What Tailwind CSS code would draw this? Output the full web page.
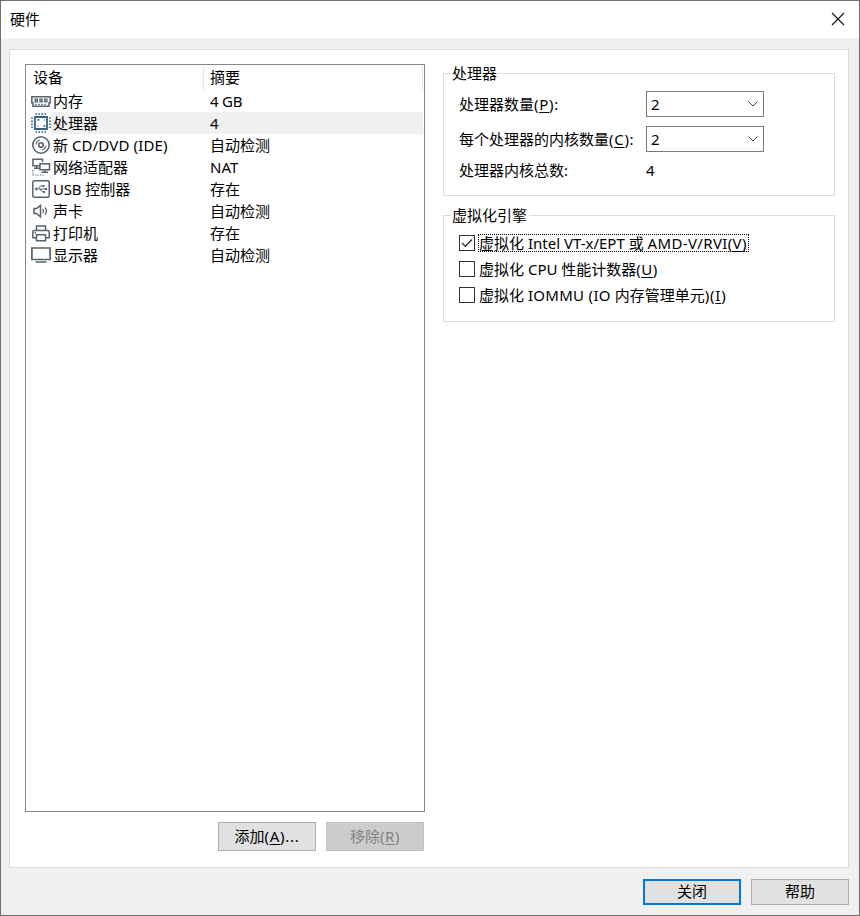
<!DOCTYPE html>
<html lang="zh-CN">
<head>
<meta charset="utf-8">
<title>硬件</title>
<script src="https://cdn.jsdelivr.net/npm/@tailwindcss/browser@4"></script>
</head>
<body class="w-[860px] h-[916px] overflow-hidden text-black text-[15px] leading-[22px] font-['Noto_Sans','Noto_Sans_CJK_SC',sans-serif] whitespace-nowrap">
<div class="flex flex-col w-[860px] h-[916px] border border-[#6e6e6e] bg-[#f0f0f0]">
  <header class="flex items-center justify-between h-[37px] shrink-0 bg-white pl-[9px] pr-[14px]">
    <h1 class="text-[15px] pb-[2px]">硬件</h1>
    <svg class="w-[14px] h-[14px] mb-px" viewBox="0 0 14 14" fill="none" stroke="#111" stroke-width="1.1"><path d="M1 1l12 12M13 1L1 13"/></svg>
  </header>
  <main class="flex mt-[11px] mx-2 pl-[15px] pt-[14px] w-[840px] h-[819px] shrink-0 border border-[#dcdcdc] bg-white">
    <section class="w-[400px]">
      <div class="w-[400px] h-[748px] border border-[#828790] pt-px pr-px">
        <div class="flex h-6 leading-[23px]">
          <div class="w-[178px] pl-[7px] border-r border-[#e5e5e5]">设备</div>
          <div class="grow pl-[6px] border-r border-[#e5e5e5]">摘要</div>
        </div>
        <div class="flex h-[22px] pl-[5px]">
          <svg class="w-5 h-[22px] shrink-0" viewBox="0 0 20 22" fill="none" stroke="#54646f"><path d="M.8 6.800h18.400v6h-1.200v3.400H2v-3.400H.8z" stroke-width="1.500"/><path d="M3.500 8.500h3.500v4h-3.500zM8.300 8.500h3.500v4h-3.500zM13.100 8.500h3.500v4h-3.500z" fill="#54646f" stroke="none"/><path d="M4.700 9.800h1.200v1.200h-1.200zM9.500 9.800h1.200v1.200h-1.200zM14.300 9.800h1.200v1.200h-1.200z" fill="#b8c0c6" stroke="none"/><path d="M4 14.300h12" stroke-dasharray="2 1"/></svg>
          <div class="w-[154px] pl-[2px]">内存</div><div class="grow pl-[5px] tracking-[-.2px]">4 GB</div>
        </div>
        <div class="flex h-[22px] pl-[5px]">
          <svg class="w-5 h-[22px] shrink-0" viewBox="0 0 20 22" fill="none" stroke="#35617f"><path d="M4 5h12v12H4z" stroke-width="1.800"/><path d="M4.500 2h11.500M4.500 20h11.500M1 5.500v11.500M19 5.500v11.500" stroke-width="2.200" stroke-dasharray="1.500 1.500" stroke="#55809e"/><path d="M6.500 7h1.800v1.800H6.500zM12.500 13h1.800v1.800h-1.800zM6.500 13.500h1v1h-1zM13 7.500h1v1h-1z" fill="#35617f" stroke="none"/></svg>
          <div class="w-[154px] pl-[2px] bg-[#f0f0f0]">处理器</div><div class="grow pl-[5px] bg-[#f0f0f0]">4</div>
        </div>
        <div class="flex h-[22px] pl-[5px]">
          <svg class="w-5 h-[22px] shrink-0" viewBox="0 0 20 22" fill="none" stroke="#54646f"><circle cx="10" cy="11" r="8.200" stroke-width="1.600"/><circle cx="10" cy="11" r="2.300" stroke-width="1.600"/><path d="M5 10.500q.5-3.500 4-4.500M15 11.500q-.5 3.500-4 4.500" stroke-width="1.200"/></svg>
          <div class="w-[154px] pl-[2px]">新 <span class="tracking-[.15px]">CD/DVD (IDE)</span></div><div class="grow pl-[5px]">自动检测</div>
        </div>
        <div class="flex h-[22px] pl-[5px]">
          <svg class="w-5 h-[22px] shrink-0" viewBox="0 0 20 22" fill="none" stroke="#54646f" stroke-width="1.500"><path d="M8.500 9.700H1.900V3.300h9.600V6M5.500 9.700v2.300M3 12.200h5.500M9 7.700h9.500v6H9zM13.700 14v2M10.500 16.200h6.500"/><path d="M1.900 14v5h11.500" stroke-width="1.200" stroke-dasharray="1.200 1.200"/></svg>
          <div class="w-[154px] pl-[2px]">网络适配器</div><div class="grow pl-[5px]">NAT</div>
        </div>
        <div class="flex h-[22px] pl-[5px]">
          <svg class="w-5 h-[22px] shrink-0" viewBox="0 0 20 22" fill="none" stroke="#54646f"><rect x="1.800" y="2.800" width="16.400" height="16.400" rx="1.500" stroke-width="1.500"/><path d="M5 11h10M7 11l2.500-3H12M9 11l2.500 3H13"/><path d="M6 9v4l-2.500-2z" fill="#54646f" stroke="none"/><circle cx="15" cy="11" r="1.200" fill="#54646f" stroke="none"/><path d="M11.500 7h2v2h-2zM12 13h2v2h-2z" fill="#54646f" stroke="none"/></svg>
          <div class="w-[154px] pl-[2px]"><span class="tracking-[-.2px]">USB</span> 控制器</div><div class="grow pl-[5px]">存在</div>
        </div>
        <div class="flex h-[22px] pl-[5px]">
          <svg class="w-5 h-[22px] shrink-0" viewBox="0 0 20 22" fill="none" stroke="#54646f" stroke-width="1.500"><path d="M3 8.600h2.500l4-3.300v11.500l-4-3.300H3z"/><path d="M11.800 9q1.300 2 0 4.200M14 7.500q2.800 3.500 0 7" stroke-width="1.300"/></svg>
          <div class="w-[154px] pl-[2px]">声卡</div><div class="grow pl-[5px]">自动检测</div>
        </div>
        <div class="flex h-[22px] pl-[5px]">
          <svg class="w-5 h-[22px] shrink-0" viewBox="0 0 20 22" fill="none" stroke="#54646f" stroke-width="1.500"><path d="M5.500 8.500V4h9v4.500M5 15.800H1.800V10q0-1.500 1.500-1.500h13.400q1.500 0 1.500 1.500v5.800H15M5.500 12.700h9v6h-9zM3.500 10.800h1.500"/></svg>
          <div class="w-[154px] pl-[2px]">打印机</div><div class="grow pl-[5px]">存在</div>
        </div>
        <div class="flex h-[22px] pl-[5px]">
          <svg class="w-5 h-[22px] shrink-0" viewBox="0 0 20 22" fill="none" stroke="#54646f" stroke-width="1.700"><path d="M.9 4h18.200v11.500H.9zM4.500 18h11"/></svg>
          <div class="w-[154px] pl-[2px]">显示器</div><div class="grow pl-[5px]">自动检测</div>
        </div>
      </div>
      <div class="flex justify-end gap-[10px] mt-[10px] pr-px leading-[26px]">
        <button class="w-[98px] h-[29px] pb-[2px] border border-[#adadad] bg-[#e1e1e1]">添加<span class="tracking-[.7px]">(<u class="underline-offset-2">A</u>)...</span></button>
        <button disabled class="w-[98px] h-[29px] pb-[2px] border border-[#bfbfbf] bg-[#cccccc] text-[#838383]">移除<span class="tracking-[.6px]">(<u class="underline-offset-2">R</u>)</span></button>
      </div>
    </section>
    <section class="ml-[18px] pt-[9px] w-[392px]">
      <fieldset class="h-[123px] w-[392px] border border-[#dcdcdc] pl-[15px]">
        <div class="-mt-[12px] -ml-[8px] w-[47px] pl-px h-[22px] bg-white">处理器</div>
        <div class="flex items-center h-[26px] mt-[7px]"><label class="w-[187px]">处理器数量<span class="tracking-[.7px]">(<u class="underline-offset-2">P</u>):</span></label>
          <div class="flex items-center justify-between w-[118px] h-[26px] border border-[#7a7a7a] pl-[4px] pr-[5px]">2<svg class="w-[10px] h-[6px]" viewBox="0 0 10 6" fill="none" stroke="#444"><path d="M.5.5L5 5 9.500.5"/></svg></div></div>
        <div class="flex items-center h-[26px] mt-[9px]"><label class="w-[187px]">每个处理器的内核数量<span class="tracking-[.7px]">(<u class="underline-offset-2">C</u>):</span></label>
          <div class="flex items-center justify-between w-[118px] h-[26px] border border-[#7a7a7a] pl-[4px] pr-[5px]">2<svg class="w-[10px] h-[6px]" viewBox="0 0 10 6" fill="none" stroke="#444"><path d="M.5.5L5 5 9.500.5"/></svg></div></div>
        <div class="flex mt-[7px]"><span class="w-[187px]">处理器内核总数:</span><span>4</span></div>
      </fieldset>
      <fieldset class="h-[107px] w-[392px] mt-[19px] border border-[#dcdcdc] pl-[15px]">
        <div class="-mt-[12px] -ml-[8px] w-[78px] pl-px h-[22px] bg-white">虚拟化引擎</div>
        <div class="flex flex-col gap-[8px] mt-[8px]">
          <label class="flex items-center h-[18px] gap-[3px]"><span class="flex items-center justify-center w-4 h-4 border border-[#333]"><svg class="w-3 h-3" viewBox="0 0 12 12" fill="none" stroke="#333" stroke-width="1.400"><path d="M1 6l3.300 3.300L11 2.500"/></svg></span><span class="w-[271px] h-[18px] leading-[16px] border border-dotted border-black">虚拟化 Intel VT-x/EPT 或 <span class="tracking-[.35px]">AMD-V/RVI(<u class="underline-offset-2">V</u>)</span></span></label>
          <label class="flex items-center h-[18px] gap-[4px]"><span class="w-4 h-4 border border-[#333]"></span><span>虚拟化 CPU 性能计数器<span class="tracking-[.5px]">(<u class="underline-offset-2">U</u>)</span></span></label>
          <label class="flex items-center h-[18px] gap-[4px]"><span class="w-4 h-4 border border-[#333]"></span><span>虚拟化 <span class="tracking-[.3px]">IOMMU (IO</span> 内存管理单元<span class="tracking-[.8px]">)(<u class="underline-offset-2">I</u>)</span></span></label>
        </div>
      </fieldset>
    </section>
  </main>
  <footer class="flex justify-end gap-[10px] mt-[11px] pr-[10px]">
    <button class="w-[98px] h-[26px] leading-[21px] pb-px border-2 border-[#0078d7] bg-[#e1e1e1]">关闭</button>
    <button class="w-[98px] h-[26px] leading-[22px] pb-[2px] border border-[#adadad] bg-[#e1e1e1]">帮助</button>
  </footer>
</div>
</body>
</html>
